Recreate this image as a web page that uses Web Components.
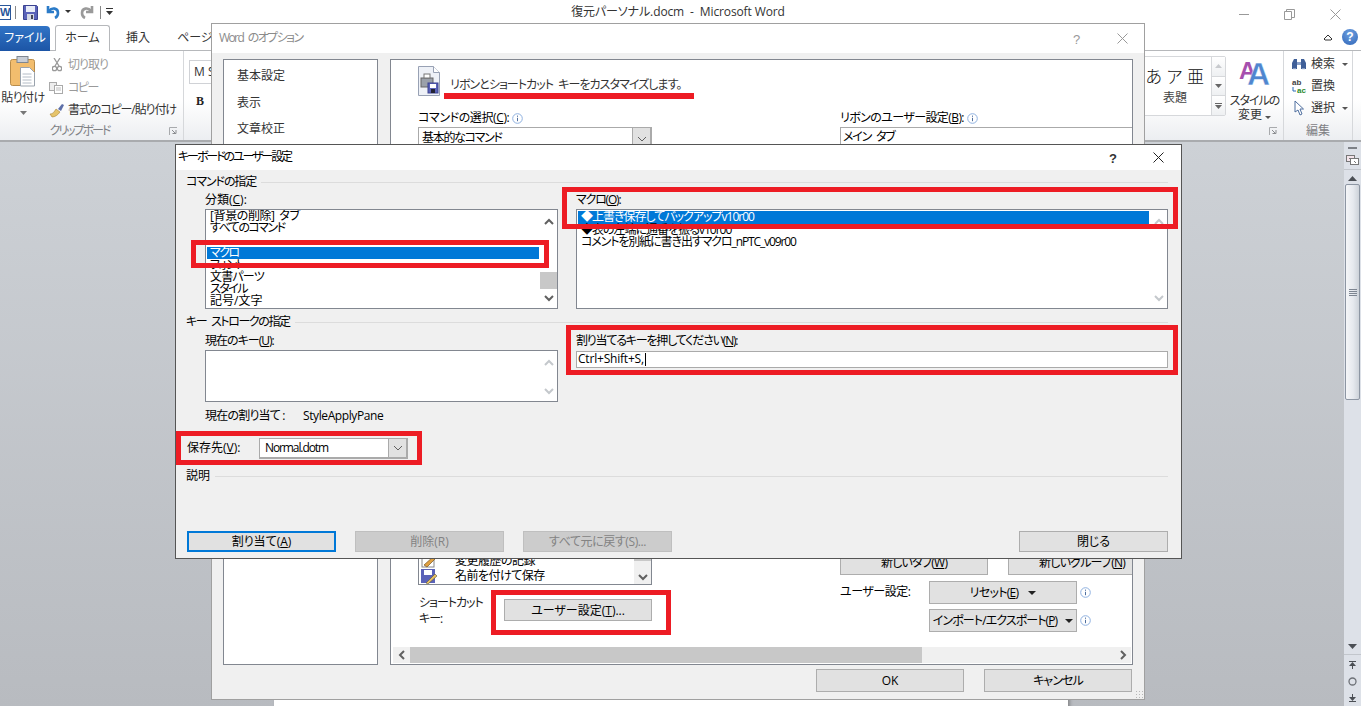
<!DOCTYPE html>
<html lang="ja"><head><meta charset="utf-8"><title>Word</title>
<style>
html,body{margin:0;padding:0;height:100%;overflow:hidden;background:#fff}
body{font:12px/1.2 "Open Sans","Noto Sans CJK JP",sans-serif;font-feature-settings:"palt";color:#000}
</style></head><body>
<word-app>
  <word-titlebar></word-titlebar>
  <word-tabs></word-tabs>
  <word-ribbon></word-ribbon>
  <word-workspace></word-workspace>
  <options-dialog></options-dialog>
  <keyboard-dialog></keyboard-dialog>
  <red-box style="left:444px;top:93px;width:250px;height:6px"></red-box>
  <red-box frame style="left:191px;top:240px;width:358px;height:28px"></red-box>
  <red-box frame style="left:562px;top:187px;width:616px;height:42px"></red-box>
  <red-box frame style="left:566px;top:325px;width:612px;height:50px"></red-box>
  <red-box frame style="left:176px;top:431px;width:246px;height:34px"></red-box>
  <red-box frame style="left:491px;top:590px;width:180px;height:45px"></red-box>
</word-app>
<script>
const FONT='font:12px/1.2 "Open Sans","Noto Sans CJK JP",sans-serif;font-feature-settings:"palt";';
const ls=(v,t)=>`<span style="letter-spacing:${v}px;word-spacing:3px">${t}</span>`;
class Base extends HTMLElement{
  constructor(){super();this.attachShadow({mode:'open'}).innerHTML='<style>'+this.css()+'</style>'+this.html();}
  css(){return ''} html(){return '<slot></slot>'}
}
const def=(n,c)=>customElements.define(n,c);

const CHEV={up:'M1 6 5 2 9 6',down:'M1 2 5 6 9 2',left:'M6 1 2 5 6 9',right:'M2 1 6 5 2 9'};
def('w-arrow',class extends Base{
  css(){return ':host{display:inline-flex;align-items:center;justify-content:center}svg{display:block}'}
  html(){const d=this.getAttribute('dir')||'down',c=this.hasAttribute('faint')?'#c4c8cc':'#606060';
    const h=d==='up'||d==='down',w=this.hasAttribute('thin')?1:2;
    return `<svg width="${h?10:8}" height="${h?8:10}" viewBox="0 0 ${h?10:8} ${h?8:10}"><path d="${CHEV[d]}" fill="none" stroke="${c}" stroke-width="${w}"/></svg>`}
});
def('w-info',class extends Base{
  css(){return ':host{display:inline-block;width:11px;height:11px}svg{display:block}'}
  html(){return '<svg width="11" height="11" viewBox="0 0 11 11"><circle cx="5.5" cy="5.5" r="4.8" fill="#fff" stroke="#8fb1e0"/><path d="M5.5 2.6v1.2M5.5 4.8v3.4" stroke="#4f6f9f"/></svg>'}
});
def('w-btn',class extends Base{
  css(){return `:host{display:flex;align-items:center;justify-content:center;box-sizing:border-box;width:var(--w,149px);height:var(--h,21px);padding-top:1px;background:#e1e1e1;border:1px solid #adadad;white-space:nowrap;flex:none}
  :host([primary]){border:2px solid #0078d7}
  :host([disabled]){background:#ccc;border-color:#bfbfbf;color:#838383}
  .in{display:flex;align-items:center;gap:var(--gap,8px)}`}
  html(){return '<div class="in"><slot></slot></div>'}
});
def('w-drop',class extends Base{
  css(){return ':host{display:inline-block;width:0;height:0;border:4px solid transparent;border-top:4px solid #222;border-bottom:0;margin-left:2px}'}
  html(){return ''}
});
def('w-grouphead',class extends Base{
  css(){return ':host{display:flex;align-items:center;height:14px;gap:5px;white-space:nowrap}i{flex:1;height:1px;background:#dcdcdc}'}
  html(){return '<div><slot></slot></div><i></i>'}
});
def('w-select',class extends Base{
  css(){return `:host{display:flex;box-sizing:border-box;width:var(--w,149px);height:var(--h,21px);background:#fff;border:1px solid #aaa;border-right-width:2px;border-bottom-width:2px;align-items:stretch;flex:none}
  div{flex:1;padding-left:var(--pl,5px);display:flex;align-items:center;white-space:nowrap;overflow:hidden}
  span{width:17px;background:#e1e1e1;border-left:1px solid #aaa;display:flex;align-items:center;justify-content:center}`}
  html(){return '<div><slot></slot></div><span><w-arrow dir="down" thin></w-arrow></span>'}
});
def('w-listbox',class extends Base{
  css(){return `:host{display:block;box-sizing:border-box;width:var(--w,353px);height:var(--h,100px);border:1px solid #828790;background:#fff;position:relative}
  .in{display:grid;grid-template-columns:1fr 17px;height:100%}
  .rows{min-width:0;overflow:hidden;padding:var(--pt,0) 1px 0 1px}
  .bar{background:#fff;display:flex;flex-direction:column;justify-content:space-between;align-items:center;padding:8px 0 6px;box-sizing:border-box;position:relative}
  b{position:absolute;left:0;right:0;background:#c8c8c8;top:var(--ttop,62px);height:var(--th,16px)}`}
  html(){const f=this.hasAttribute('faint')?'faint':'';
    return `<div class="in"><div class="rows"><slot></slot></div><div class="bar"><w-arrow dir="up" ${f}></w-arrow>${this.hasAttribute('thumb')?'<b></b>':''}<w-arrow dir="down" ${f}></w-arrow></div></div>`}
});
def('w-row',class extends Base{
  css(){return `:host{display:block;height:var(--rh,12.2px);line-height:12px;padding-left:3px;white-space:nowrap;overflow:visible}
  :host([sel]){background:#0078d7;color:#fff}`}
});
def('red-box',class extends Base{
  css(){return `:host{position:absolute;box-sizing:border-box;background:#ed1c24;display:block}
  :host([frame]){background:none;border:5px solid #ed1c24}`}
  html(){return ''}
});

def('word-app',class extends Base{
  css(){return `:host{display:grid;grid-template-rows:24px 27px 91px 1fr;width:1361px;height:706px;position:relative;overflow:hidden;${FONT}}`}
});

def('word-titlebar',class extends Base{
  css(){return `:host{display:grid;grid-template-columns:1fr auto 1fr;align-items:center;background:#fff;height:24px;color:#333;white-space:nowrap}
  .qat{display:flex;align-items:center;height:24px;overflow:hidden}
  .w{width:12px;height:15px;margin-left:-1px;background:#fff;border:1px solid #2a5699;box-sizing:border-box;color:#2a5699;font:bold 11px/13px "Liberation Sans",sans-serif;overflow:hidden;text-align:right}
  .sep{width:1px;height:13px;background:#888}
  .title{margin-right:5px;font-size:12px;letter-spacing:-.12px;white-space:pre}
  .ctl{display:flex;justify-content:flex-end;gap:0;height:24px}
  svg{display:block}
  .ctl svg{position:relative;top:9px}`}
  html(){return `<div class="qat"><div class="w">W</div><span class="sep" style="margin-left:4px"></span>
   <svg style="margin-left:7px" width="15" height="15" viewBox="0 0 15 15"><path d="M.5.5h13l1 1v13H.5z" fill="#5a62b8" stroke="#3a4290"/><rect x="3" y="1" width="9" height="6" fill="#e8ecf8"/><rect x="4" y="9" width="7" height="6" fill="#d4d8e4"/><rect x="8" y="10" width="2" height="4" fill="#445"/></svg>
   <svg style="margin-left:8px" width="15" height="14" viewBox="0 0 15 14"><path d="M2 1v6h6M3 6c3-4 9-3 9 2 0 2-1 4-3 5" fill="none" stroke="#2b7bc8" stroke-width="2.6"/></svg>
   <svg style="margin-left:4px" width="6" height="4" viewBox="0 0 6 4"><path d="M0 0h6L3 3z" fill="#333"/></svg>
   <svg style="margin-left:9px" width="14" height="14" viewBox="0 0 14 14"><path d="M12 1v6H6M11 6C8 2 2 3 2 8c0 2 1 4 3 5" fill="none" stroke="#9a9a9a" stroke-width="2.6"/></svg>
   <span class="sep" style="margin-left:6px"></span>
   <svg style="margin-left:5px" width="7" height="8" viewBox="0 0 7 8"><path d="M0 0h7v1H0zM0 3h7L3.5 7z" fill="#333"/></svg>
  </div>
  <div class="title">復元パーソナル.docm  -  Microsoft Word</div>
  <div class="ctl">
   <svg width="11" height="11" viewBox="0 0 11 11"><path d="M0 5.5h10" stroke="#999"/></svg>
   <svg style="margin-left:34px" width="11" height="11" viewBox="0 0 11 11"><path d="M.5 2.5h7v8h-7zM2.5 2.5v-2h8v8h-3" fill="none" stroke="#999"/></svg>
   <svg style="margin-left:35px;margin-right:20px" width="11" height="11" viewBox="0 0 11 11"><path d="M.5.5l10 10M10.5.5l-10 10" stroke="#999"/></svg>
  </div>`}
});

def('word-tabs',class extends Base{
  css(){return `:host{display:flex;align-items:flex-end;height:27px;background:#fff;box-shadow:inset 0 -1px 0 #b6b8bb;position:relative;color:#333}
  .file{width:50px;height:25px;padding-bottom:1px;box-sizing:border-box;background:linear-gradient(#3174c6,#1c55a6);border-radius:0 4px 0 0;color:#fff;display:flex;align-items:center;justify-content:center;margin-right:5px}
  .home{width:55px;height:26px;padding-bottom:1px;box-sizing:border-box;background:#fff;border:1px solid #b6b8bb;border-bottom:0;border-radius:3px 3px 0 0;display:flex;align-items:center;justify-content:center;margin-right:16px}
  .t{height:25px;padding-bottom:1px;box-sizing:border-box;display:flex;align-items:center;margin-right:27px;white-space:nowrap}
  .end{margin-left:auto;display:flex;align-items:center;gap:9px;height:25px;padding:0 3px 3px 0;box-sizing:border-box}
  .help{width:16px;height:16px;border-radius:50%;background:radial-gradient(circle at 50% 30%,#6fa0e0,#2f66b8);color:#fff;font:bold 12px/16px "Liberation Sans",sans-serif;text-align:center}`}
  html(){return `<div class="file">ファイル</div><div class="home">ホーム</div><div class="t">挿入</div><div class="t">ページ</div>
  <div class="end"><svg width="10" height="7" viewBox="0 0 10 7"><path d="M1 5 5 1l4 4-1 1H2z" fill="#fff" stroke="#333"/></svg><div class="help">?</div></div>`}
});

def('word-ribbon',class extends Base{
  css(){return `:host{display:flex;height:91px;box-sizing:border-box;background:linear-gradient(#fff 0,#fff 55%,#eceef1 100%);border-bottom:2px solid #a9abae;color:#444;white-space:nowrap}
  .grp{display:flex;flex-direction:column;box-sizing:border-box;border-right:1px solid #d6d8db;position:relative}
  .body{flex:1;min-height:0;display:flex}
  .foot{height:18px;display:flex;align-items:center;justify-content:center;color:#7f8185;position:relative}
  .launch{position:absolute;right:5px;top:5px}
  .clip{width:184px}
  .clip .foot{padding-right:24px}
  .clip .launch{right:5px}
  .paste{width:46px;display:flex;flex-direction:column;align-items:center;color:#333}
  .small{display:flex;flex-direction:column;padding-top:3px;flex:1}
  .r{height:23px;display:flex;align-items:center;color:#333}
  .r svg{flex:none}
  .dis{color:#9a9a9a}
  .mid{flex:1;display:flex;flex-direction:row;justify-content:space-between;min-width:0}
  .fnt{padding:9px 0 0 5px;display:flex;flex-direction:column}
  .msbox{width:60px;height:24px;box-sizing:border-box;border:1px solid #d0d2d6;background:#fff;padding-left:4px;display:flex;align-items:center;color:#333;font-size:12px}
  .bold{font:bold 12px "Liberation Serif",serif;margin:10px 0 0 7px;color:#222}
  .sty{display:flex;width:180px}
  .gal{margin-top:5px;height:60px;box-sizing:border-box;width:123px;border:1px solid #d6d8db;border-radius:2px;background:#fff;display:flex;justify-content:flex-end}
  .it{width:60px;margin-right:6px;display:flex;flex-direction:column;align-items:center;color:#111}
  .big{font-size:17px;line-height:20px;margin-top:10px;letter-spacing:4.5px;margin-right:-4px;font-feature-settings:"normal";font-weight:300}
  .cap{margin-top:4px;font-size:12px;color:#444}
  .sb{width:13px;display:flex;flex-direction:column;border-left:1px solid #d6d8db}
  .sb span{flex:1;display:flex;align-items:center;justify-content:center;background:linear-gradient(#fff,#eef0f2);border-bottom:1px solid #d6d8db}
  .chg{width:57px;display:flex;flex-direction:column;align-items:center;line-height:14px;color:#333}
  .edit{width:69px;padding-left:7px}
  .edit .body{flex-direction:column;padding:2px 0 0 0}
  .e{height:22px;display:flex;align-items:center;gap:4px;color:#333}
  .e svg:first-child{width:16px;flex:none}
  .tail{width:8px;flex:none}
  .tri{width:0;height:0;border:3px solid transparent;border-top:3px solid #555;border-bottom:0;margin-left:3px;display:inline-block}`}
  html(){const L='<svg class="launch" width="9" height="9" viewBox="0 0 9 9"><path d="M.5 8V.5H8" fill="none" stroke="#a8aaad"/><path d="M3 3l3 3M3.5 6.5H7V3" fill="none" stroke="#8a8c90"/></svg>';
  return `<div class="grp clip"><div class="body">
    <div class="paste"><svg style="margin-top:5px" width="26" height="31" viewBox="0 0 26 31"><rect x=".5" y="3.5" width="24" height="26" rx="2" fill="#f2bd6e" stroke="#b98c4a"/><rect x="7" y="0.5" width="11" height="6" fill="#c9ced6" stroke="#7f8791"/><path d="M10.5 11.5h9l5 5v13.5h-14z" fill="#fff" stroke="#9aa3ad"/><path d="M12.5 18h9M12.5 21h9M12.5 24h9M12.5 27h9" stroke="#b4bcc6"/></svg>
      <div style="margin-top:4px;letter-spacing:-.5px">貼り付け</div><svg style="margin-top:6px" width="7" height="4" viewBox="0 0 7 4"><path d="M0 0h7L3.500 4z" fill="#777"/></svg></div>
    <div class="small">
      <div class="r dis"><svg style="margin:0 6px 0 6px" width="10" height="14" viewBox="0 0 10 14"><path d="M2 0l5 8M8 0 3 8" stroke="#999" stroke-width="1.3"/><circle cx="2.500" cy="10.500" r="2.200" fill="none" stroke="#999" stroke-width="1.300"/><circle cx="7.500" cy="10.500" r="2.200" fill="none" stroke="#999" stroke-width="1.300"/></svg>${ls(-1,'切り取り')}</div>
      <div class="r dis"><svg style="margin:0 5px 0 3px" width="14" height="12" viewBox="0 0 14 12"><rect x=".5" y=".5" width="7" height="8" fill="#eee" stroke="#aaa"/><rect x="5.500" y="3.500" width="8" height="8" fill="#fff" stroke="#aaa"/><path d="M7 6h5M7 8h5" stroke="#bbb"/></svg>${ls(-1.5,'コピー')}</div>
      <div class="r"><svg style="margin:0 3px 0 3px" width="16" height="15" viewBox="0 0 16 15"><path d="M9 6l4-5 2 1-3 6z" fill="#5d6fa8"/><path d="M1 11c3 0 4-2 6-5l4 3c-2 3-5 5-8 5z" fill="#e6c46a" stroke="#a9873a" stroke-width=".6"/></svg>${ls(-1.1,'書式のコピー/貼り付け')}</div>
    </div></div>
    <div class="foot">${ls(-2,'クリップボード')}${L}</div></div>
  <div class="grp mid"><div class="fnt"><div class="msbox">M S</div><div class="bold">B</div></div>
   <div class="sty"><div class="gal"><div class="it"><div class="big">あア亜</div><div class="cap">表題</div></div>
      <div class="sb"><span><svg width="7" height="4" viewBox="0 0 7 4"><path d="M0 4h7L3.500 0z" fill="#c8cace"/></svg></span><span><svg width="7" height="4" viewBox="0 0 7 4"><path d="M0 0h7L3.500 4z" fill="#666"/></svg></span><span style="border-bottom:0"><svg width="7" height="6" viewBox="0 0 7 6"><path d="M0 0h7v1H0zM0 2h7L3.500 6z" fill="#666"/></svg></span></div></div>
     <div class="chg"><svg style="margin-top:6px" width="32" height="30" viewBox="0 0 32 30"><text x="0" y="22" font-family="Liberation Sans" font-weight="bold" font-size="24" fill="#a64fae">A</text><text x="8" y="28" font-family="Liberation Sans" font-weight="bold" font-size="32" fill="#4f86cf" stroke="#fff" stroke-width=".4">A</text></svg>
       <div style="margin-top:7px;letter-spacing:-1px">スタイルの</div><div>変更<i class="tri"></i></div></div>
     </div>
     <div class="foot" style="position:absolute;right:0;bottom:0;width:20px">${L}</div></div>
  <div class="grp edit"><div class="body">
     <div class="e"><svg width="16" height="14" viewBox="0 0 16 14"><path d="M1 12V6l2-4h3v10zM15 12V6l-2-4h-3v10z" fill="#3f5f98"/><path d="M6 5h4v3H6z" fill="#8aa0c8"/><path d="M2 12h3M11 12h3" stroke="#cfd8ea"/></svg>検索<i class="tri"></i></div>
     <div class="e"><svg width="16" height="16" viewBox="0 0 16 16"><text x="1" y="7" font-family="Liberation Sans" font-weight="bold" font-size="8" fill="#444">ab</text><text x="6" y="15" font-family="Liberation Sans" font-weight="bold" font-size="8" fill="#2a8a2a">ac</text><path d="M2 9v4h3" fill="none" stroke="#2b6cb8"/></svg>置換</div>
     <div class="e"><svg width="16" height="16" viewBox="0 0 16 16"><path d="M4 1v11l3-2 2 5 2-1-2-5h3.500z" fill="#fff" stroke="#4f6f9f"/></svg>選択<i class="tri"></i></div>
    </div><div class="foot" style="margin-left:-7px">編集</div></div>
  <div class="tail"></div>`}
});

def('word-workspace',class extends Base{
  css(){return `:host{display:grid;grid-template-columns:1fr 17px;min-height:0;background:linear-gradient(#cdd1d6,#b8bbc0);overflow:hidden}
  .area{padding:8px 0 0 274px;overflow:hidden}
  .page{width:794px;height:1000px;background:#fff;box-shadow:2px 0 3px rgba(90,90,90,.5)}
  .bar{background:#dde1e8;display:flex;flex-direction:column;align-items:center;box-sizing:border-box;position:relative;color:#555}
  .split{width:9px;height:2px;background:#7d8187;margin-top:5px}
  .ic{margin-top:4px}
  hr{border:0;height:1px;width:100%;background:#c2c6cc;margin:0}
  .th{width:15px;height:216px;box-sizing:border-box;border:1px solid #8d96a3;border-radius:2px;background:linear-gradient(90deg,#f5f6f8,#e6e9ee 55%,#cdd2d9);display:flex;align-items:center;justify-content:center;margin-top:3px}
  .grip{width:8px;height:7px;background:repeating-linear-gradient(#7d8591 0 1px,transparent 1px 2px)}
  svg{display:block}
  .btns{display:flex;flex-direction:column;align-items:center;gap:8px;padding:5px 0 3px}`}
  html(){return `<div class="area"><div class="page"></div></div>
  <div class="bar"><div class="split"></div>
   <svg class="ic" width="13" height="12" viewBox="0 0 13 12"><rect x=".5" y="2.500" width="8" height="6" fill="#f3e4ea" stroke="#777"/><rect x="4.500" y="5.500" width="8" height="6" fill="#fff" stroke="#777"/><path d="M3 5l2 2M8 8l2 2" stroke="#777"/></svg>
   <hr style="margin-top:4px;width:100%">
   <svg style="margin-top:6px" width="9" height="5" viewBox="0 0 9 5"><path d="M0 5h9L4.500 0z" fill="#4b4f55"/></svg>
   <div class="th"><div class="grip"></div></div>
   <svg style="margin-top:auto" width="9" height="5" viewBox="0 0 9 5"><path d="M0 0h9L4.500 5z" fill="#4b4f55"/></svg>
   <hr style="margin-top:5px">
   <div class="btns">
    <svg width="7" height="9" viewBox="0 0 7 9"><path d="M0 1h7v1H0zM0 6l3.500-4L7 6zM3 6h1v3H3z" fill="#4b4f55"/></svg>
    <svg width="9" height="9" viewBox="0 0 9 9"><circle cx="4.500" cy="4.500" r="3.500" fill="none" stroke="#6d7177" stroke-width="1.300"/></svg>
    <svg width="7" height="9" viewBox="0 0 7 9"><path d="M3 0h1v3H3zM0 3h7L3.500 7zM0 7h7v1H0z" fill="#4b4f55"/></svg>
   </div></div>`}
});

def('options-dialog',class extends Base{
  css(){return `:host{position:absolute;left:211px;top:23px;width:934px;height:677px;box-sizing:border-box;border:1px solid #a0a0a0;background:#f0f0f0;display:flex;flex-direction:column;overflow:hidden}
  .title{height:29px;flex:none;background:#fff;display:flex;align-items:center;padding:0 7px;color:#8b8b8b}
  .title span{flex:1}
  .body{flex:1;min-height:0;display:flex;gap:12px;padding:6px 11px 0}
  .nav{width:155px;box-sizing:border-box;border:1px solid #828790;background:#fff;padding:3px 0 0 13px;height:606px;color:#333}
  .nav div{height:26.5px;display:flex;align-items:center}
  .main{width:743px;height:606px;box-sizing:border-box;border:1px solid #828790;background:#fff;display:flex;flex-direction:column;padding-left:27px;position:relative;overflow:hidden}
  .hd{display:flex;gap:10px;padding-top:6px;height:31px;color:#333}
  .hd div{padding-top:12px;font-size:12px;letter-spacing:-.95px;word-spacing:3px}
  .cols{display:flex;margin-top:12px}
  .c{width:234px;margin-right:188px}
  .lab{height:18px;display:flex;align-items:center;gap:3px;white-space:nowrap}
  .cbox{box-sizing:border-box;height:40px;border:1px solid #aaa;border-right-width:0;width:292px;background:#fff;padding:2px 2px;letter-spacing:-1.2px;word-spacing:3px}
  .bottom{margin-top:auto;display:flex;height:89px}
  .bl{width:234px;margin-right:188px}
  .list{height:40px;box-sizing:border-box;border:1px solid #828790;border-top:0;display:grid;grid-template-columns:1fr 17px;background:#fff}
  .it{display:flex;height:15.5px;align-items:center;gap:18px;padding-left:2px;white-space:nowrap;letter-spacing:-.5px}
  .it svg{flex:none}
  .lrows{padding-top:8px;overflow:hidden}
  .lbar{background:#f0f0f0;display:flex;flex-direction:column;justify-content:flex-end;align-items:center;padding-bottom:3px;position:relative}
  .lbar b{position:absolute;left:0;right:0;top:0;height:16px;background:#c8c8c8}
  .sc{display:flex;margin-top:10px;line-height:16px;padding-left:1px}
  .sc w-btn{margin:4px 0 0 21px}
  .sc div{color:#222;width:64px;white-space:nowrap;letter-spacing:-1px}
  .br{width:292px;overflow:hidden}
  .pair{display:flex;gap:20px;margin-top:5px;height:25px}
  .row{display:flex;align-items:center;margin-top:6px;height:23px}
  .row+.row{margin-top:5px}
  .row .l{width:89px;white-space:nowrap;letter-spacing:-.5px}
  .row w-info{margin-left:3px}
  .hs{height:16px;margin:13px 1px 1px -25px;background:#f0f0f0;display:flex;align-items:center;flex:none;position:relative}
  .hs .t{position:absolute;left:17px;top:0;height:16px;width:512px;background:#c8c8c8}
  .hs w-arrow{width:17px}
  .hs w-arrow:last-child{margin-left:auto}
  .ft{height:23px;flex:none;display:flex;justify-content:flex-end;gap:20px;padding:4px 12px 7px;position:relative}
  .grip{position:absolute;right:1px;bottom:1px;width:8px;height:8px;background:radial-gradient(circle at center,#b8b8b8 0 1px,transparent 1px) 0 0/3px 3px}
  u{text-underline-offset:1px}`}
  html(){return `<div class="title"><span>${ls(-1.6,'Word のオプション')}</span><svg width="8" height="12" style="margin-right:36px" viewBox="0 0 8 12"><text x="0" y="11" font-family="Liberation Sans" font-size="13" fill="#999">?</text></svg><svg style="margin-right:9px" width="11" height="11" viewBox="0 0 11 11"><path d="M.5.5l10 10M10.5.5l-10 10" stroke="#999"/></svg></div>
  <div class="body">
    <div class="nav"><div>基本設定</div><div>表示</div><div>文章校正</div></div>
    <div class="main">
      <div class="hd"><svg width="22" height="30" viewBox="0 0 22 30"><path d="M.5.500h15l6 6v23H.5z" fill="#eef1f7" stroke="#98a1b4"/><path d="M15.500.500v6h6" fill="#fff" stroke="#98a1b4"/><rect x="3" y="12" width="12" height="9" fill="#9ba1aa" stroke="#666"/><rect x="6" y="8" width="6" height="4" fill="#fff" stroke="#777"/><rect x="10" y="17" width="10" height="10" fill="#5a62b8" stroke="#3a4290"/><rect x="12" y="18" width="6" height="4" fill="#fff"/><rect x="13" y="23" width="4" height="4" fill="#223"/></svg>
        <div>リボンとショートカット キーをカスタマイズします。</div></div>
      <div class="cols">
        <div class="c"><div class="lab"><span style="letter-spacing:-.4px">コマンドの選択(<u>C</u>):</span><w-info></w-info></div><w-select style="--w:234px;--h:24px;--pl:3px">${ls(-1.3,'基本的なコマンド')}</w-select></div>
        <div><div class="lab"><span style="letter-spacing:-.6px">リボンのユーザー設定(<u>B</u>):</span><w-info></w-info></div><div class="cbox">メイン タブ</div></div>
      </div>
      <div class="bottom">
        <div class="bl">
          <div class="list"><div class="lrows">
            <div class="it"><svg width="16" height="15" viewBox="0 0 16 15"><rect x="1" y="0" width="12" height="14" fill="#fff" stroke="#888"/><path d="M3 12 13 3l2 2-9 9z" fill="#e0a040" stroke="#775522" stroke-width=".7"/></svg><span>変更履歴の記録</span></div>
            <div class="it"><svg width="16" height="15" viewBox="0 0 16 15"><rect x="0" y="0" width="14" height="14" fill="#5a62b8"/><rect x="3" y="1" width="8" height="5" fill="#fff"/><path d="M5 14 14 5l2 2-9 8z" fill="#e8c060" stroke="#554" stroke-width=".6"/></svg><span>名前を付けて保存</span></div>
          </div><div class="lbar"><b></b><w-arrow dir="down"></w-arrow></div></div>
          <div class="sc"><div>ショートカット<br>キー:</div><w-btn style="--w:148px;--h:22px"><span>ユーザー設定(<u>T</u>)...</span></w-btn></div>
        </div>
        <div class="br">
          <div class="pair"><w-btn style="--w:148px;--h:25px"><span style="letter-spacing:-.8px">新しいタブ(<u>W</u>)</span></w-btn><w-btn style="--w:148px;--h:25px"><span style="letter-spacing:-.8px">新しいグループ(<u>N</u>)</span></w-btn></div>
          <div class="row"><span class="l">ユーザー設定:</span><w-btn style="--w:148px;--h:23px"><span style="letter-spacing:-.7px">リセット(<u>E</u>)</span><w-drop></w-drop></w-btn><w-info></w-info></div>
          <div class="row"><span class="l"></span><w-btn style="--w:148px;--h:23px;--gap:6px"><span style="letter-spacing:-.9px">インポート/エクスポート(<u>P</u>)</span><w-drop></w-drop></w-btn><w-info></w-info></div>
        </div>
      </div>
      <div class="hs"><div class="t"></div><w-arrow dir="left"></w-arrow><w-arrow dir="right"></w-arrow></div>
    </div>
  </div>
  <div class="ft"><w-btn style="--w:148px;--h:23px">OK</w-btn><w-btn style="--w:148px;--h:23px">${ls(-.9,'キャンセル')}</w-btn><div class="grip"></div></div>`}
});

def('keyboard-dialog',class extends Base{
  css(){return `:host{position:absolute;left:175px;top:144px;width:1007px;height:415px;box-sizing:border-box;border:1px solid #555;background:#f0f0f0;display:flex;flex-direction:column}
  .title{height:25px;flex:none;background:#fff;display:flex;align-items:center;padding-left:2px}
  .title span.t{flex:1;letter-spacing:-2.1px}
  .body{flex:1;min-height:0;padding:5px 13px 6px 10px;display:flex;flex-direction:column}
  .two{display:grid;grid-template-columns:353px 592px;gap:18px;margin:3px 0 0 19px}
  .lab{height:17px;display:flex;align-items:center;white-space:pre}
  .cur{display:flex;margin:6px 0 0 19px;height:16px;align-items:center}
  .cur span{width:98px;letter-spacing:-.8px}
  .cur b{font-weight:400;letter-spacing:-.4px}
  .save{display:flex;align-items:center;margin:14px 0 0 1px;height:21px}
  .save span{width:72px}
  .inp{box-sizing:border-box;height:17px;margin-top:1px;border:1px solid #aaa;background:#fff;padding-left:1px;display:flex;align-items:center;white-space:nowrap;letter-spacing:-.2px}
  .inp i{width:1px;height:13px;background:#000;margin-left:1px}
  .btns{display:flex;gap:19px;margin:auto 0 0 1px}
  .btns .end{margin-left:auto}
  u{text-underline-offset:1px}`}
  html(){return `<div class="title"><span class="t">キーボードのユーザー設定</span><svg style="margin-right:36px" width="8" height="12" viewBox="0 0 8 12"><text x="0" y="11" font-family="Liberation Sans" font-size="13" font-weight="bold" fill="#333">?</text></svg><svg style="margin-right:17px" width="11" height="11" viewBox="0 0 11 11"><path d="M.5.5l10 10M10.5.5l-10 10" stroke="#222"/></svg></div>
  <div class="body">
    <w-grouphead>${ls(-1.1,'コマンドの指定')}</w-grouphead>
    <div class="two">
      <div><div class="lab">分類(<u>C</u>):</div>
        <w-listbox thumb style="--w:353px;--h:100px;--ttop:62px;--th:17px">
          <w-row style="letter-spacing:-.4px;word-spacing:2px">[背景の削除] タブ</w-row><w-row style="letter-spacing:-1.5px">すべてのコマンド</w-row><w-row></w-row><w-row sel style="letter-spacing:-1.5px">マクロ</w-row><w-row style="letter-spacing:-1.5px">フォント</w-row><w-row style="letter-spacing:-.8px">文書パーツ</w-row><w-row style="letter-spacing:-1.5px">スタイル</w-row><w-row>記号/文字</w-row>
        </w-listbox></div>
      <div><div class="lab">${ls(-1.2,'マクロ(<u>O</u>):')}</div>
        <w-listbox faint style="--w:592px;--h:100px;--pt:1px">
          <w-row sel style="--rh:12.5px;letter-spacing:-1px">◆上書き保存してバックアップv10r00</w-row><w-row style="--rh:12.5px;letter-spacing:-1px">◆表の左端に通番を振るv10r00</w-row><w-row style="--rh:12.5px;letter-spacing:-1.1px">コメントを別紙に書き出すマクロ_nPTC_v09r00</w-row>
        </w-listbox></div>
    </div>
    <w-grouphead style="margin-top:6px">${ls(-1.4,'キー ストロークの指定')}</w-grouphead>
    <div class="two" style="margin-top:4px">
      <div><div class="lab">${ls(-1,'現在のキー(<u>U</u>):')}</div><w-listbox faint style="--w:353px;--h:52px"></w-listbox></div>
      <div><div class="lab">${ls(-1.2,'割り当てるキーを押してください(<u>N</u>):')}</div><div class="inp">Ctrl+Shift+S,<i></i></div></div>
    </div>
    <div class="cur"><span>現在の割り当て :</span><b>StyleApplyPane</b></div>
    <div class="save"><span>保存先(<u>V</u>):</span><w-select>${ls(-1.1,'Normal.dotm')}</w-select></div>
    <w-grouphead style="margin-top:10px">説明</w-grouphead>
    <div class="btns">
      <w-btn primary><span>割り当て(<u>A</u>)</span></w-btn><w-btn disabled>削除(R)</w-btn><w-btn disabled>${ls(-.4,'すべて元に戻す(S)...')}</w-btn><w-btn class="end">閉じる</w-btn>
    </div>
  </div>`}
});
</script>
</body></html>
